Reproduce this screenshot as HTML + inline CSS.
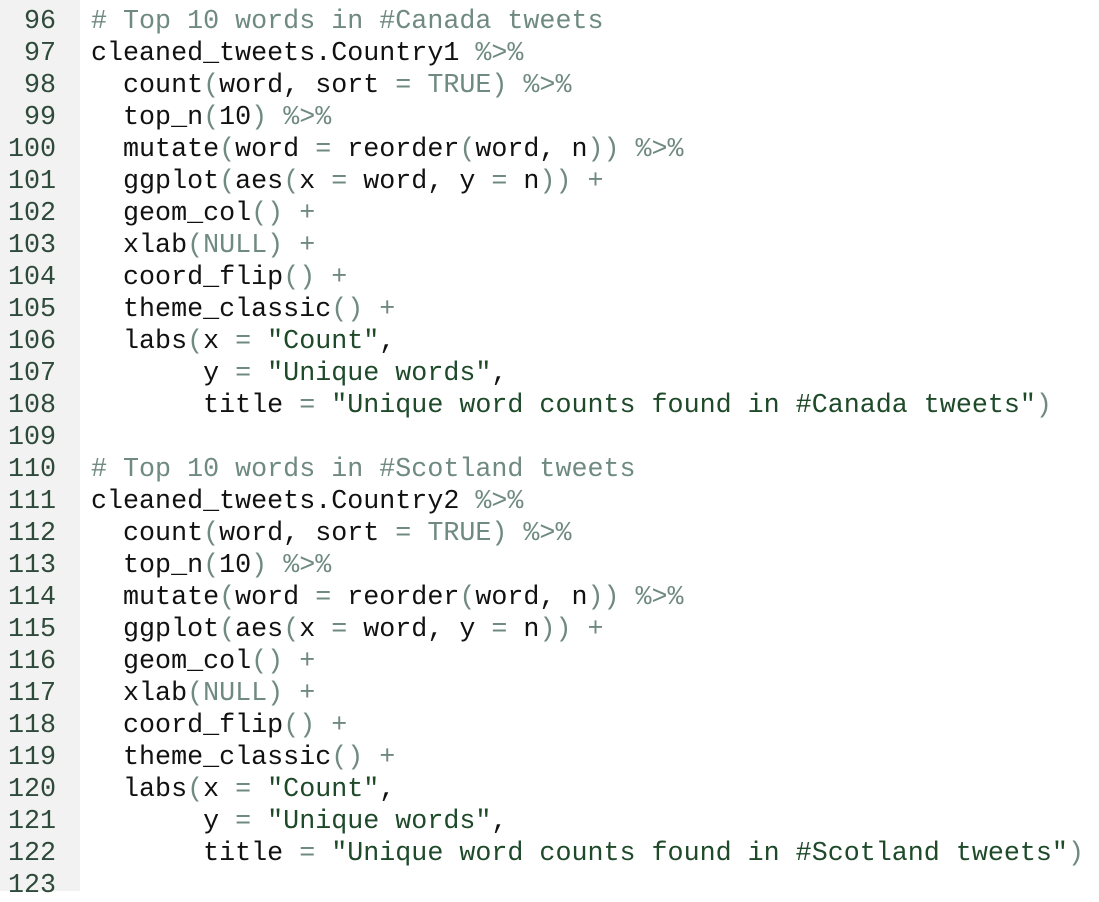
<!DOCTYPE html><html><head><style>
body{margin:0;width:1099px;height:891px;overflow:hidden;background:#fff;font-family:"Liberation Mono",monospace;font-size:26.7px;}
.g{position:absolute;left:0;top:0;width:80px;height:891px;background:#f2f2f2;}
.n{position:absolute;left:0;width:56px;text-align:right;color:#2e4a3a;}
.c{position:absolute;left:91px;color:#111;}
.c .l{white-space:pre;}
.l{height:32px;line-height:32px;}
.p{color:#6f8a80}.s{color:#1e4a2a}
</style></head><body><div class="g"></div>
<div class="n" style="top:6px"><div class="l">96</div><div class="l">97</div><div class="l">98</div><div class="l">99</div><div class="l">100</div><div class="l">101</div><div class="l">102</div><div class="l">103</div><div class="l">104</div><div class="l">105</div><div class="l">106</div><div class="l">107</div><div class="l">108</div><div class="l">109</div><div class="l">110</div><div class="l">111</div><div class="l">112</div><div class="l">113</div><div class="l">114</div><div class="l">115</div><div class="l">116</div><div class="l">117</div><div class="l">118</div><div class="l">119</div><div class="l">120</div><div class="l">121</div><div class="l">122</div><div class="l">123</div></div>
<div class="c" style="top:6px"><div class="l"><span class="p"># Top 10 words in #Canada tweets</span></div><div class="l">cleaned_tweets.Country1 <span class="p">%&gt;%</span></div><div class="l">  count<span class="p">(</span>word, sort <span class="p">=</span> <span class="p">TRUE)</span> <span class="p">%&gt;%</span></div><div class="l">  top_n<span class="p">(</span>10<span class="p">)</span> <span class="p">%&gt;%</span></div><div class="l">  mutate<span class="p">(</span>word <span class="p">=</span> reorder<span class="p">(</span>word, n<span class="p">))</span> <span class="p">%&gt;%</span></div><div class="l">  ggplot<span class="p">(</span>aes<span class="p">(</span>x <span class="p">=</span> word, y <span class="p">=</span> n<span class="p">))</span> <span class="p">+</span></div><div class="l">  geom_col<span class="p">()</span> <span class="p">+</span></div><div class="l">  xlab<span class="p">(NULL)</span> <span class="p">+</span></div><div class="l">  coord_flip<span class="p">()</span> <span class="p">+</span></div><div class="l">  theme_classic<span class="p">()</span> <span class="p">+</span></div><div class="l">  labs<span class="p">(</span>x <span class="p">=</span> <span class="s">"Count"</span>,</div><div class="l">       y <span class="p">=</span> <span class="s">"Unique words"</span>,</div><div class="l">       title <span class="p">=</span> <span class="s">"Unique word counts found in #Canada tweets"</span><span class="p">)</span></div><div class="l"> </div><div class="l"><span class="p"># Top 10 words in #Scotland tweets</span></div><div class="l">cleaned_tweets.Country2 <span class="p">%&gt;%</span></div><div class="l">  count<span class="p">(</span>word, sort <span class="p">=</span> <span class="p">TRUE)</span> <span class="p">%&gt;%</span></div><div class="l">  top_n<span class="p">(</span>10<span class="p">)</span> <span class="p">%&gt;%</span></div><div class="l">  mutate<span class="p">(</span>word <span class="p">=</span> reorder<span class="p">(</span>word, n<span class="p">))</span> <span class="p">%&gt;%</span></div><div class="l">  ggplot<span class="p">(</span>aes<span class="p">(</span>x <span class="p">=</span> word, y <span class="p">=</span> n<span class="p">))</span> <span class="p">+</span></div><div class="l">  geom_col<span class="p">()</span> <span class="p">+</span></div><div class="l">  xlab<span class="p">(NULL)</span> <span class="p">+</span></div><div class="l">  coord_flip<span class="p">()</span> <span class="p">+</span></div><div class="l">  theme_classic<span class="p">()</span> <span class="p">+</span></div><div class="l">  labs<span class="p">(</span>x <span class="p">=</span> <span class="s">"Count"</span>,</div><div class="l">       y <span class="p">=</span> <span class="s">"Unique words"</span>,</div><div class="l">       title <span class="p">=</span> <span class="s">"Unique word counts found in #Scotland tweets"</span><span class="p">)</span></div></div>
</body></html>
